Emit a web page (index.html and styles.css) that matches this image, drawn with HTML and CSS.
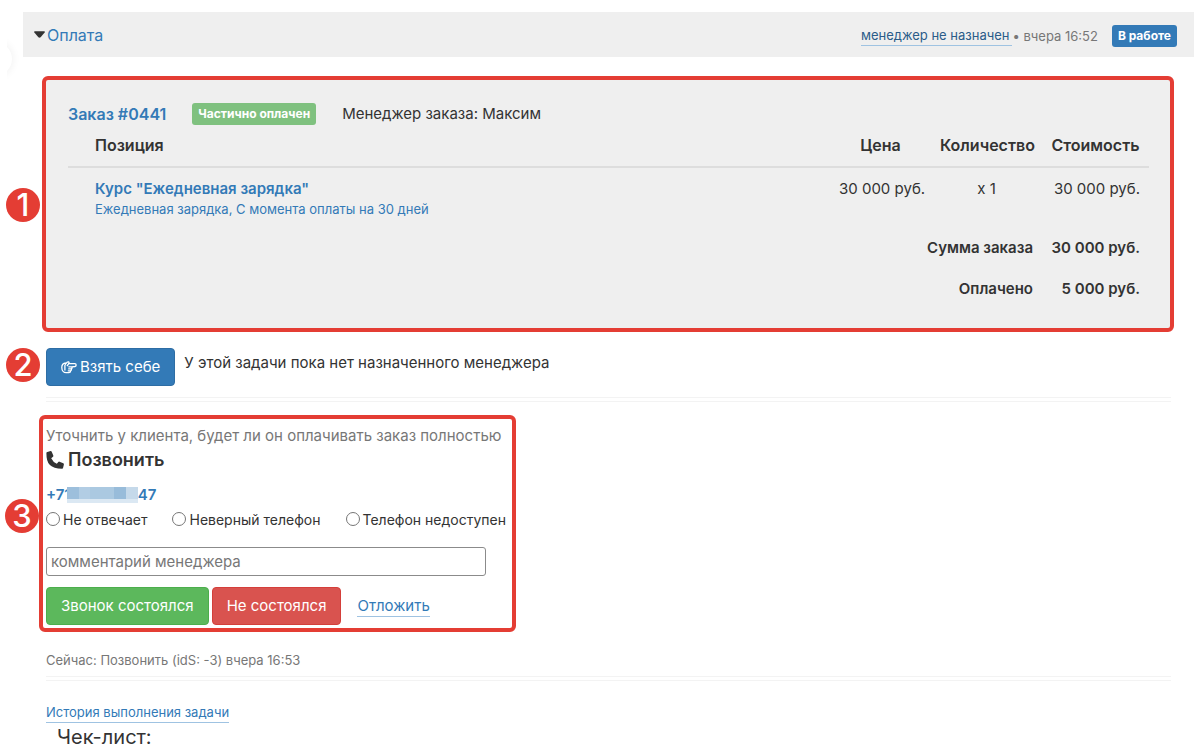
FILE: index.html
```html
<!DOCTYPE html>
<html lang="ru">
<head>
<meta charset="utf-8">
<meta name="viewport" content="width=device-width, initial-scale=1">
<title>Оплата</title>
<link rel="stylesheet" href="styles.css">
</head>
<body>
<div class="edge" aria-hidden="true"></div>
<main class="page">
  <header class="task-head">
    <svg class="caret" viewBox="0 0 10 6" aria-hidden="true"><path d="M0.7 0h8.6q.9.3.4 1.2L6 5.4q-1 .9-2 0L.3 1.2Q-.2.3.7 0z"/></svg>
    <a class="task-title" href="#">Оплата</a>
    <div class="task-meta">
      <a class="dashed manager" href="#">менеджер не назначен</a>
      <span class="when">• вчера 16:52</span>
      <span class="label label-blue">В работе</span>
    </div>
  </header>

  <section class="frame order">
    <span class="num">1</span>
    <div class="order-head">
      <a class="order-id" href="#">Заказ #0441</a>
      <span class="label label-green">Частично оплачен</span>
      <span>Менеджер заказа: Максим</span>
    </div>
    <table class="items">
      <colgroup><col><col class="c-price"><col class="c-qty"><col class="c-sum"></colgroup>
      <thead>
        <tr><th>Позиция</th><th>Цена</th><th>Количество</th><th>Стоимость</th></tr>
      </thead>
      <tbody>
        <tr class="item">
          <td><a class="course" href="#">Курс "Ежедневная зарядка"</a><a class="offer" href="#">Ежедневная зарядка, С момента оплаты на 30 дней</a></td>
          <td>30 000 руб.</td><td>x 1</td><td>30 000 руб.</td>
        </tr>
      </tbody>
      <tfoot>
        <tr><th colspan="3">Сумма заказа</th><td>30 000 руб.</td></tr>
        <tr><th colspan="3">Оплачено</th><td>5 000 руб.</td></tr>
      </tfoot>
    </table>
  </section>

  <section class="assign">
    <span class="num">2</span>
    <button class="btn btn-blue" type="button">
      <svg class="hand" viewBox="0 0 16 13" aria-hidden="true"><path d="M4.800 2C2.300 2.200.8 4 .8 6.500s1.600 5.200 4.400 5.200h2.600c1.300 0 1.900-.9 1.600-1.800 1-.3 1.300-1.200.9-1.900.8-.5.9-1.400.5-2.100L14 5.500c1.600-.3 1.500-2.900-.1-2.900H7.600l.5-.7C8.100.9 7 .5 6.200 1.200L3.900 3.900M3.900 3.900v5.600M7.600 2.900L6 5M7.400 5.800h3.200M7.200 7.900h2.900M6.800 9.800h2.500"/></svg>
      Взять себе</button>
    <p>У этой задачи пока нет назначенного менеджера</p>
  </section>
  <hr class="rule">

  <form class="frame call">
    <span class="num">3</span>
    <p class="goal">Уточнить у клиента, будет ли он оплачивать заказ полностью</p>
    <h2>
      <svg class="phone" viewBox="0 0 18 18" aria-hidden="true"><path d="M1.300.9L4.600.1q.8-.1 1.100.6L7.300 4.500q.3.700-.3 1.200L5.200 7.200Q7 11 10.800 12.800l1.500-1.800q.5-.6 1.200-.3l3.800 1.600q.7.400.6 1.100l-.8 3.400q-.2.800-1 .9Q7.500 17.700 3.900 14.100T.4 1.900q.1-.8.900-1z"/></svg>
      Позвонить</h2>
    <a class="tel" href="#">+71<span class="mask"><i></i><i></i><i></i><i></i><i></i><i></i></span>47</a>
    <div class="radios">
      <label><input type="radio" name="result">Не отвечает</label>
      <label><input type="radio" name="result">Неверный телефон</label>
      <label><input type="radio" name="result">Телефон недоступен</label>
    </div>
    <input class="comment" type="text" placeholder="комментарий менеджера" aria-label="комментарий менеджера">
    <div class="actions">
      <button class="btn btn-green" type="button">Звонок состоялся</button>
      <button class="btn btn-red" type="button">Не состоялся</button>
      <a class="dashed later" href="#">Отложить</a>
    </div>
  </form>

  <p class="now">Сейчас: Позвонить (idS: -3) вчера 16:53</p>
  <hr class="rule">
  <div class="history"><a class="dashed" href="#">История выполнения задачи</a></div>
  <h3>Чек-лист:</h3>
</main>
</body>
</html>
```
FILE: styles.css
```css
* { box-sizing: border-box; }
body {
  margin: 0;
  background: #fff;
  color: #333;
  font: 15px/20px Inter, "Open Sans", sans-serif;
}
a { color: #337ab7; text-decoration: none; }
p, h2, h3 { margin: 0; font-weight: 400; }
.page { padding: 12px 6px 0 23px; }

.edge {
  position: absolute;
  left: 7px;
  top: 30px;
  width: 12px;
  height: 50px;
  overflow: hidden;
}
.edge::before {
  content: "";
  position: absolute;
  left: -29px;
  top: 12px;
  width: 34px;
  height: 34px;
  border-radius: 50%;
  box-shadow: 0 0 10px #eee;
}

.task-head {
  display: flex;
  align-items: center;
  height: 45px;
  padding: 0 17px 0 11px;
  background: #efefef;
}
.caret { width: 11px; height: 7px; margin-right: 2px; fill: #333; }
.task-title { font-size: 16px; }
.task-meta { display: flex; align-items: center; margin-left: auto; padding-top: 2px; font-size: 13px; }
.dashed { border-bottom: 1px solid #9fc3e2; }
.manager { color: #2b5c89; padding-right: 2px; }
.when { margin: 0 14px 0 1px; color: #777; }
.label {
  padding: 0 6px;
  border-radius: 3px;
  color: #fff;
  font-size: 12px;
  font-weight: 700;
  line-height: 22px;
}
.label-blue { background: #337ab7; }
.label-green { background: #7fc17f; }

.frame { position: relative; border: 4px solid #e43d34; border-radius: 6px; }
.num {
  position: absolute;
  left: -40px;
  width: 34px;
  height: 34px;
  border-radius: 50%;
  background: #e43d34;
  color: #fff;
  font: 500 31px/34px Inter, sans-serif;
  text-align: center;
}
.order { margin: 19px 20px 0 19px; padding: 23px 21px 8px 22px; background: #efefef; }
.order .num { top: 108px; }
.order-head { display: flex; align-items: center; gap: 26px; height: 22px; }
.order-id { font-size: 16px; font-weight: 600; }
.course { font-weight: 600; }
.items { width: 100%; border-collapse: collapse; table-layout: fixed; }
.items th { font-weight: 600; }
.items th, .items td { padding: 0 9px; text-align: right; vertical-align: top; white-space: nowrap; }
.items th:first-child, .items td:first-child { padding-left: 27px; }
.items thead th { height: 42px; padding-top: 10px; border-bottom: 2px solid #ddd; font-size: 16px; text-align: center; }
.items thead th:first-child, .item td:first-child { text-align: left; }
.item td { height: 71px; padding-top: 11px; }
.item td:nth-child(3) { text-align: center; }
.offer { display: block; font-size: 13px; }
.items tfoot th, .items tfoot td { height: 41px; font-weight: 600; }
.c-price { width: 101px; }
.c-qty { width: 111px; }
.c-sum { width: 107px; }

.assign { position: relative; display: flex; gap: 9px; margin: 16px 23px 11px; }
.assign p { padding-top: 5px; }
.btn {
  display: flex;
  align-items: center;
  gap: 3px;
  height: 38px;
  padding: 0 14px;
  border: 1px solid;
  border-radius: 4px;
  color: #fff;
  font: inherit;
}
.btn-blue { background: #337ab7; border-color: #2e6da4; }
.btn-green { background: #5cb85c; border-color: #4cae4c; }
.btn-red { background: #d9534f; border-color: #d43f3a; }
.hand { width: 16px; height: 13px; fill: none; stroke: #fff; stroke-width: 1.3; stroke-linejoin: round; }

.rule { height: 5px; margin: 0 23px; border: solid #f3f3f3; border-width: 1px 0; }

.call { width: fit-content; min-width: 477px; margin: 13px 0 0 16px; padding: 7px 6px 3px 3px; }
.call .num { top: 80px; left: -38px; }
.goal { color: #777; }
h2 { display: flex; align-items: center; gap: 4px; padding-top: 2px; font-size: 18px; font-weight: 600; line-height: 24px; }
.phone { width: 18px; height: 18px; fill: #333; }
.tel { display: flex; align-items: center; margin-top: 13px; color: #337ab7; font-weight: 600; }
.mask { position: relative; display: flex; width: 71px; height: 16px; margin-left: -4px; border-bottom: 4px solid #dbe8f3; }
.mask i { flex: 1; background: #abc9e1; }
.mask i:nth-child(1) { background: #9dbfdc; }
.mask i:nth-child(2) { background: #b2cde4; }
.mask i:nth-child(5) { background: #98bcda; }
.mask i:nth-child(6) { background: #c5d9ea; }
.radios { display: flex; gap: 25px; margin-top: 5px; font-size: 14px; white-space: nowrap; }
.radios label { display: flex; align-items: center; gap: 3px; }
.radios input {
  appearance: none;
  width: 14px;
  height: 14px;
  margin: 0 0 3px;
  border: 1px solid #767676;
  border-radius: 50%;
  background: #fff;
}
.comment {
  display: block;
  width: 440px;
  height: 29px;
  margin: 17px 0 11px;
  padding: 0 4px;
  border: 1px solid #8b8b8b;
  border-radius: 3px;
  font: inherit;
}
.comment::placeholder { color: #777; }
.actions { display: flex; align-items: center; gap: 3px; }
.later { margin-left: 13px; }

.now { margin: 18px 23px 6px; color: #777; font-size: 13px; }
.history { margin: 21px 23px 0; font-size: 13px; }
.history a { display: inline-block; }
h3 { margin: 0 34px; font-size: 20px; line-height: 28px; }
```
